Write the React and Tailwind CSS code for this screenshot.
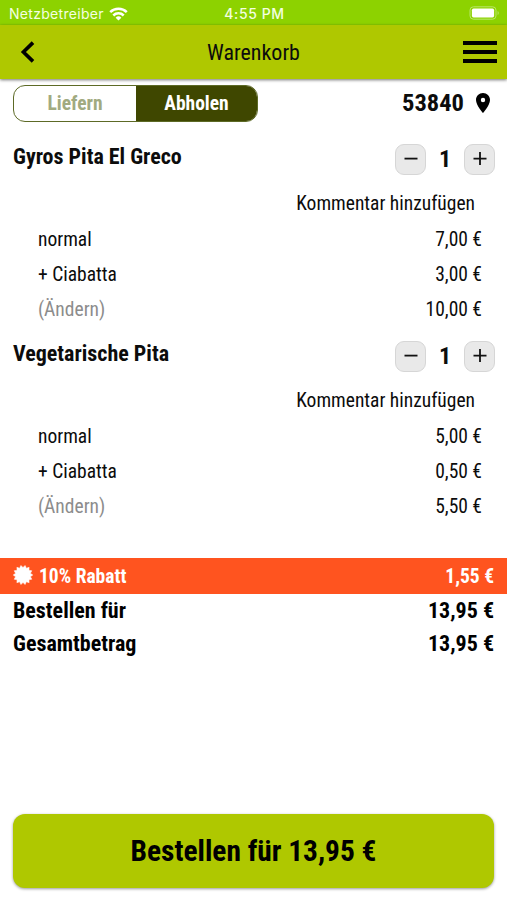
import { useState } from 'react'

const initialItems = [
  {
    name: 'Gyros Pita El Greco',
    count: 1,
    rows: [
      { label: 'normal', price: '7,00 €' },
      { label: '+ Ciabatta', price: '3,00 €' },
    ],
    total: '10,00 €',
  },
  {
    name: 'Vegetarische Pita',
    count: 1,
    rows: [
      { label: 'normal', price: '5,00 €' },
      { label: '+ Ciabatta', price: '0,50 €' },
    ],
    total: '5,50 €',
  },
]

// 14-pointed seal, alternating outer and inner radius
const sealPoints = Array.from({ length: 28 }, (_, i) => {
  const r = i % 2 === 0 ? 9.8 : 7.6
  const a = ((i + 1) * Math.PI) / 14
  return `${(10 + r * Math.sin(a)).toFixed(2)},${(10 - r * Math.cos(a)).toFixed(2)}`
}).join(' ')

function StatusBar() {
  return (
    <div className="grid grid-cols-3 items-center h-[25px] pl-[9px] pr-[7px] bg-[#8dd200] text-[#f4ffe0] font-['Inter',sans-serif] text-[14px] leading-none">
      <div className="flex items-center gap-[5px] pt-[3px]">
        <span className="tracking-[0.3px]">Netzbetreiber</span>
        <svg className="w-[19px] h-[14px] shrink-0" viewBox="0 0 19 14" fill="none" stroke="#fff" strokeWidth="2.5">
          <path d="M1.2 5.2a11.8 11.8 0 0 1 16.6 0" />
          <path d="M4.3 8.5a7.4 7.4 0 0 1 10.4 0" />
          <path d="M9.5 13.6 6.6 10.7a4.1 4.1 0 0 1 5.8 0z" fill="#fff" stroke="none" />
        </svg>
      </div>
      <div className="text-center font-medium tracking-[0.6px] pt-[3px]">4:55 PM</div>
      <div className="flex justify-end items-center pt-[1px]">
        <svg className="w-[31px] h-[14px]" viewBox="0 0 31 14">
          <rect x="1" y="0.8" width="26" height="12.4" rx="3.4" fill="none" stroke="#b9e66a" strokeWidth="1" />
          <rect x="2.9" y="2.6" width="22.2" height="8.8" rx="1.6" fill="#fff" />
          <path d="M28.6 5v4a2.3 2.3 0 0 0 0-4z" fill="#b9e66a" />
        </svg>
      </div>
    </div>
  )
}

function Header() {
  return (
    <header className="flex items-center justify-between h-[54px] pl-[20px] pr-[10px] bg-[#afc800] shadow-[0_1px_3px_rgba(0,0,0,0.55)]">
      <button className="w-[24px]" aria-label="Zurück">
        <svg className="w-[15px] h-[22px]" viewBox="0 0 15 22" fill="none" stroke="#000" strokeWidth="3.6">
          <path d="M13 1.6 3.4 11 13 20.4" />
        </svg>
      </button>
      <h1 className="text-[22px] font-normal">Warenkorb</h1>
      <button className="flex flex-col gap-[5px]" aria-label="Menü">
        <span className="w-[34px] h-[4px] bg-black" />
        <span className="w-[34px] h-[4px] bg-black" />
        <span className="w-[34px] h-[4px] bg-black" />
      </button>
    </header>
  )
}

function StepButton({ plus, onClick }) {
  return (
    <button
      onClick={onClick}
      className="flex items-center justify-center w-[31px] h-[31px] bg-[#e9e9e9] border border-[#d6d6d6] rounded-[9px]"
      aria-label={plus ? 'mehr' : 'weniger'}
    >
      <svg className="w-[14px] h-[14px]" viewBox="0 0 14 14" stroke="#111" strokeWidth="1.8">
        <path d={plus ? 'M0.5 6.6h13M7 0.1v13' : 'M0.5 6.6h13'} />
      </svg>
    </button>
  )
}

function CartItem({ item, onChange }) {
  return (
    <section className="h-[197px]">
      <div className="flex items-start justify-between h-[43px] pl-[13px] pr-[12px]">
        <h2 className="text-[22px] leading-[27px] font-bold">{item.name}</h2>
        <div className="flex items-center">
          <StepButton onClick={() => onChange(-1)} />
          <span className="w-[38px] text-center text-[24px] leading-[32px] font-bold">{item.count}</span>
          <StepButton plus onClick={() => onChange(1)} />
        </div>
      </div>
      <div className="flex items-center justify-end h-[35px] pr-[32px] text-[19.5px]">Kommentar hinzufügen</div>
      {item.rows.map((row) => (
        <div key={row.label} className="flex items-center justify-between h-[35.4px] pt-px pl-[38px] pr-[25px] text-[19.5px]">
          <span>{row.label}</span>
          <span>{row.price}</span>
        </div>
      ))}
      <div className="flex items-center justify-between h-[35.4px] pl-[38px] pr-[25px] text-[19.5px]">
        <span className="text-[#8c8c8c]">(Ändern)</span>
        <span>{item.total}</span>
      </div>
    </section>
  )
}

function App() {
  const [items, setItems] = useState(initialItems)

  const changeCount = (index, delta) => {
    setItems(items.map((item, i) => (i === index ? { ...item, count: Math.max(0, item.count + delta) } : item)))
  }

  return (
    <div className="flex flex-col w-[507px] h-[900px] overflow-hidden bg-white text-[#0c0c0c] font-['Roboto_Condensed','Roboto',sans-serif] font-stretch-condensed">
      <StatusBar />
      <Header />

      <div className="flex items-center justify-between h-[49px] pl-[13px] pr-[17px]">
        <div className="flex w-[245px] h-[37px] border border-[#5d6a26] rounded-[12px] overflow-hidden text-[19.5px] font-bold">
          <button className="w-[122px] text-[#a1aa80]">Liefern</button>
          <button className="flex-1 bg-[#3f4700] text-white">Abholen</button>
        </div>
        <div className="flex items-center gap-[12px]">
          <span className="text-[24.5px] font-bold">53840</span>
          <svg className="w-[14px] h-[20px] mb-[2px]" viewBox="5 2 14 20">
            <path d="M12 2C8.13 2 5 5.13 5 9c0 5.25 7 13 7 13s7-7.75 7-13c0-3.87-3.13-7-7-7zm0 9.2a2.2 2.2 0 1 1 0-4.4 2.2 2.2 0 0 1 0 4.4z" />
          </svg>
        </div>
      </div>

      <main className="pt-[15px]">
        {items.map((item, i) => (
          <CartItem key={item.name} item={item} onChange={(delta) => changeCount(i, delta)} />
        ))}
      </main>

      <div className="flex items-center justify-between h-[36px] mt-[21px] px-[13px] bg-[#ff541f] text-white text-[19.5px] font-bold">
        <div className="flex items-center gap-[6px]">
          <svg className="w-[20px] h-[20px] mb-[2px]" viewBox="0 0 20 20" fill="#fff">
            <polygon points={sealPoints} stroke="#fff" strokeWidth="0.5" strokeLinejoin="round" />
          </svg>
          <span className="pt-px">10% Rabatt</span>
        </div>
        <span className="pt-px">1,55 €</span>
      </div>

      <div className="px-[13px] text-[22px] font-bold text-black">
        <div className="flex items-center justify-between h-[33px]">
          <span>Bestellen für</span>
          <span>13,95 €</span>
        </div>
        <div className="flex items-center justify-between h-[33px]">
          <span>Gesamtbetrag</span>
          <span>13,95 €</span>
        </div>
      </div>

      <button className="mt-auto mb-[12px] mx-[13px] h-[74px] shrink-0 rounded-[12px] bg-[#afc800] text-[29.4px] font-bold text-black shadow-[0_1px_3px_rgba(0,0,0,0.4)]">
        Bestellen für 13,95 €
      </button>
    </div>
  )
}

export default App
